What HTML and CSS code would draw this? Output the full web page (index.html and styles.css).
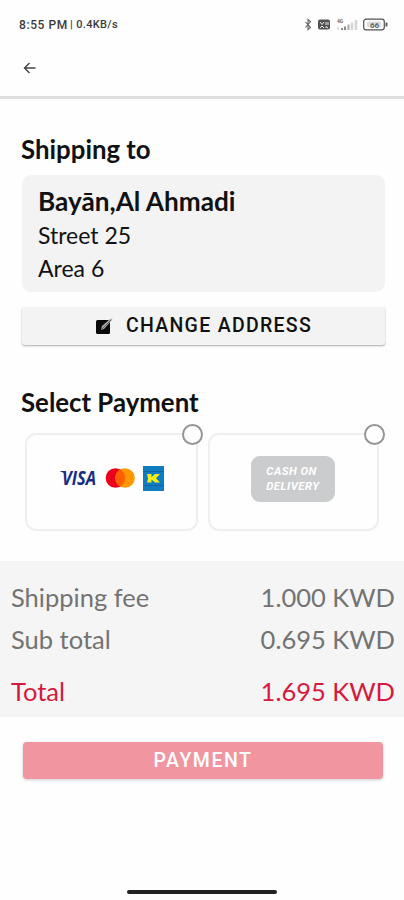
FILE: index.html
```html
<!DOCTYPE html>
<html lang="en">
<head>
<meta charset="utf-8">
<title>Checkout</title>
<link rel="stylesheet" href="styles.css">
</head>
<body>
<div class="screen">
  <header class="header">
    <div class="status">
      <div class="clock"><span>8:55 PM</span><span class="rate">| 0.4KB/s</span></div>
      <svg class="status-icons" width="84" height="16" viewBox="0 0 84 16" fill="none">
        <path d="M1.500 5l5 5.500-2.500 2v-10L6.500 4.500l-5 6" stroke="#666" stroke-width="1.1"/>
        <rect x="14" y="2.500" width="12" height="10" rx="2" fill="#505050"/>
        <path d="M16 5l2 2.500L20 5m2 0v3m2-3v3M16 11l2-2 2 2m2 0V9.500l2 1.500" stroke="#eee" stroke-width="1"/>
        <text x="33" y="6" class="network">4G</text>
        <path d="M34 12.500V10" stroke="#ddd" stroke-width="2"/>
        <path d="M38 13v-2M41 13V9.500" stroke="#888" stroke-width="2"/>
        <path d="M44.500 13V7.500" stroke="#aaa" stroke-width="2"/>
        <path d="M48 13V5.500M52 13V3" stroke="#d5d5d5" stroke-width="2.500"/>
        <rect x="59.700" y="2.200" width="20.600" height="10.600" rx="2.500" stroke="#505050" stroke-width="1.200"/>
        <path d="M82.500 5.500v4" stroke="#555" stroke-width="1.800"/>
        <rect x="63" y="4.500" width="14" height="6" rx="1" fill="#ddd"/>
        <text x="66" y="10.500" class="charge">66</text>
      </svg>
    </div>
    <svg class="back" width="14" height="12" viewBox="0 0 14 12" fill="none" stroke="#444" stroke-width="1.400"><path d="M12.500 6H2M6.500 1L1.500 6l5 5"/></svg>
  </header>

  <main>
    <section class="shipping">
      <h2 class="title ship-title">Shipping to</h2>
      <div class="address">
        <strong class="city">Bayān,Al Ahmadi</strong>
        <span class="street">Street 25</span>
        <span class="area">Area 6</span>
      </div>
      <button class="change">
        <svg width="19" height="18" viewBox="0 0 19 18"><rect x="1" y="3" width="14" height="14" rx="1.500" fill="#080808"/><path d="M7 9l8-7 2.500-.5-1 2L9 12l-3 1z" fill="#aaa"/><path d="M6.500 12.500L16 3" stroke="#555" stroke-width=".8"/></svg>
        <span class="change-label">CHANGE ADDRESS</span>
      </button>
    </section>

    <section class="payment">
      <h2 class="title pay-title">Select Payment</h2>
      <div class="methods">
        <div class="method">
          <span class="radio"></span>
          <svg class="brands" width="106" height="28" viewBox="0 0 106 28">
            <text x="3" y="21" class="visa" textLength="34" lengthAdjust="spacingAndGlyphs">VISA</text>
            <path d="M.5 7h5l2 4.500Q5 8 .5 7z" fill="#172b85"/>
            <circle cx="56.500" cy="14" r="9.800" fill="#eb001b"/>
            <circle cx="66" cy="14" r="9.800" fill="#ff9800"/>
            <path d="M61.200 5.500a9.800 9.800 0 0 1 0 17a9.800 9.800 0 0 1 0-17z" fill="#ff5f00"/>
            <rect x="84" y="2" width="21" height="25" fill="#117bc0"/>
            <path d="M84 7.500h21M84 21.500h21" stroke="#0869a8" stroke-width="1"/>
            <path d="M88 10h4.500v3l3.500-3h5l-4 4.300 4 4.200h-5l-3.500-3v3H88l1-4z" fill="#f2ee17"/>
          </svg>
        </div>
        <div class="method">
          <span class="radio"></span>
          <div class="cash">CASH ON<br>DELIVERY</div>
        </div>
      </div>
    </section>

    <section class="summary">
      <div class="row"><span class="fee">Shipping fee</span><span class="amount">1.000 KWD</span></div>
      <div class="row"><span class="sub">Sub total</span><span class="amount">0.695 KWD</span></div>
      <div class="row total"><span class="sum">Total</span><span class="amount">1.695 KWD</span></div>
    </section>
    <button class="pay">PAYMENT</button>
  </main>
  <div class="home-bar"></div>
</div>
</body>
</html>
```
FILE: styles.css
```css
* { box-sizing: border-box; }
body { margin: 0; background: #fefefe; color: #111; font-family: Lato, sans-serif; }
.screen { width: 404px; height: 900px; display: flex; flex-direction: column; overflow: hidden; }
.header { height: 99px; border-bottom: 3px solid #dfdfdf; padding: 17px 16px 0 19px; flex: none; }
.status { display: flex; justify-content: space-between; align-items: center; height: 16px; }
.clock { display: flex; gap: 2px; font: 500 12px/16px Roboto, sans-serif; letter-spacing: .6px; color: #3a3a3a; white-space: nowrap; }
.rate { font-size: 11px; letter-spacing: .35px; }
.status-icons { display: block; }
.network { font: 700 5px Roboto, sans-serif; fill: #666; }
.charge { font: 700 8px Roboto, sans-serif; fill: #666; }
.back { display: block; margin: 29px 0 0 4px; }
button { border: 0; margin: 0; padding: 0; display: flex; align-items: center; justify-content: center; }
.shipping { padding: 35px 19px 0 21px; }
.title { margin: 0; font-size: 25.8px; line-height: 30px; font-weight: 700; white-space: nowrap; }
.address { margin: 11px 0 0 1px; width: 363px; height: 117px; border-radius: 9px; background: #f3f3f3; padding: 10px 16px; display: flex; flex-direction: column; white-space: nowrap; }
.city { font-size: 26.2px; line-height: 32px; }
.street, .area { font-size: 23px; line-height: 33px; }
.street { margin-top: 2px; }
.change { width: 363px; height: 38px; margin: 15px 0 0 1px; border-radius: 3px; background: #f3f3f3; box-shadow: 0 1px 2px #aaa; color: #111; gap: 12px; font: 500 19.5px/24px Roboto, sans-serif; letter-spacing: 1.3px; }
.payment { padding: 42px 25px 0 21px; }
.methods { display: flex; gap: 10px; margin: 16px 0 0 4px; }
.method { position: relative; width: 173px; height: 98px; border: 2px solid #efefef; border-radius: 11px; display: flex; align-items: center; justify-content: center; }
.method + .method { width: 172px; }
.radio { position: absolute; top: -11px; right: -7px; width: 21px; height: 21px; border: 2px solid #959595; border-radius: 50%; background: #fefefe; }
.method + .method .radio { right: -8px; }
.brands { margin: -8px 0 0 1px; }
.visa { font: italic 700 20px "Open Sans", sans-serif; fill: #172b85; }
.cash { width: 84px; height: 46px; margin-top: -6px; border-radius: 9px; background: #cbcccd; color: #fff; padding: 8px 0 0 15px; font: italic 700 11.3px/15px Roboto, sans-serif; letter-spacing: .5px; }
.summary { margin-top: 30px; height: 156px; background: #f5f5f5; padding: 16px 9px 0 11px; font-size: 25.5px; color: #737373; }
.row { display: flex; justify-content: space-between; height: 42px; line-height: 41px; white-space: nowrap; }
.total { margin-top: 10px; color: #d41b3f; }
.pay { width: 360px; height: 37px; margin: 25px 0 0 23px; border-radius: 4px; background: #f195a1; color: #fff; box-shadow: 0 1px 3px #ccc; font: 500 19.5px/24px Roboto, sans-serif; letter-spacing: 1.5px; }
.home-bar { width: 150px; height: 4px; margin: auto auto 6px 127px; border-radius: 2px; background: #222; flex: none; }
```
